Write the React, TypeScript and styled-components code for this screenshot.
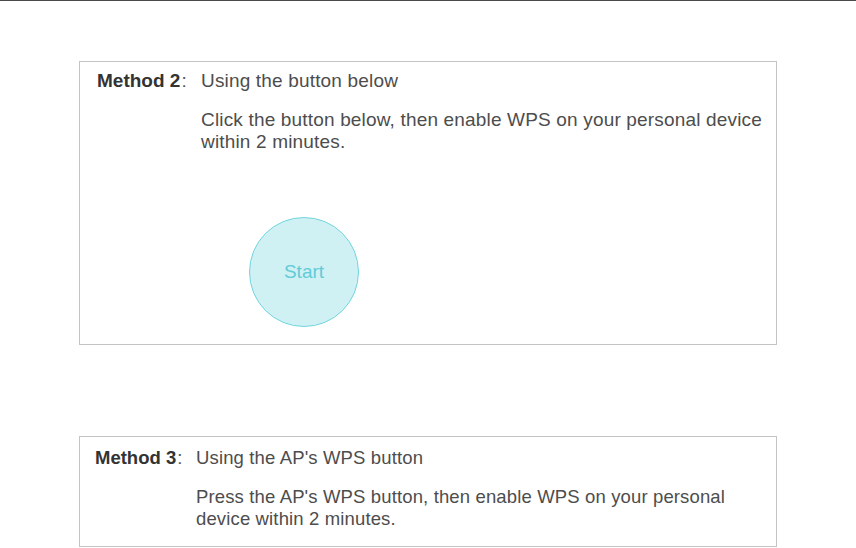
import styled, { createGlobalStyle } from "styled-components";

const GlobalStyle = createGlobalStyle`
  html, body {
    margin: 0;
    padding: 0;
    background: #ffffff;
  }
  body {
    font-family: "Liberation Sans", Arial, sans-serif;
    color: #4d4d4d;
  }
`;

const Page = styled.div`
  width: 856px;
  height: 548px;
  border-top: 1px solid #4a4a4a;
  box-sizing: border-box;
  padding-top: 60px;
  overflow: hidden;
`;

// one bordered card per WPS method; label column and type size differ slightly
const MethodBox = styled.section<{
  $top: number;
  $height: number;
  $pad: number;
  $indent: number;
  $labelW: number;
  $size: number;
  $spacing: number;
}>`
  box-sizing: border-box;
  margin: ${(p) => p.$top}px 0 0 79px;
  width: 698px;
  height: ${(p) => p.$height}px;
  border: 1px solid #c4c4c4;
  padding: ${(p) => p.$pad}px 0 0 ${(p) => p.$indent}px;
  display: grid;
  grid-template-columns: ${(p) => p.$labelW}px 1fr;
  align-content: start;
  font-size: ${(p) => p.$size}px;
  letter-spacing: ${(p) => p.$spacing}px;
  line-height: 22px;
`;

const Label = styled.div`
  display: flex;
  white-space: nowrap;
`;

const LabelBold = styled.span`
  font-weight: bold;
  color: #333333;
  letter-spacing: 0;
`;

const Colon = styled.span`
  color: #555555;
  margin-left: 1px;
`;

const Content = styled.div`
  display: flex;
  flex-direction: column;
  align-items: flex-start;
`;

const Title = styled.div`
  color: #4d4d4d;
  white-space: nowrap;
`;

const Description = styled.p`
  margin: 17px 0 0;
  color: #4d4d4d;
  white-space: nowrap;
`;

const StartButton = styled.button`
  margin: 64px 0 0 48px;
  width: 110px;
  height: 110px;
  border-radius: 50%;
  border: 1px solid #72d4de;
  background: #cff1f4;
  color: #62cbd7;
  font-family: "Liberation Sans", Arial, sans-serif;
  font-size: 19px;
  padding: 0;
  cursor: pointer;
`;

export default function App() {
  return (
    <>
      <GlobalStyle />
      <Page>
        <MethodBox $top={0} $height={284} $pad={8} $indent={17} $labelW={104} $size={19} $spacing={0.17}>
          <Label>
            <LabelBold>Method 2</LabelBold>
            <Colon>:</Colon>
          </Label>
          <Content>
            <Title>Using the button below</Title>
            <Description>
              Click the button below, then enable WPS on your personal device
              <br />
              within 2 minutes.
            </Description>
            <StartButton>Start</StartButton>
          </Content>
        </MethodBox>

        <MethodBox $top={91} $height={111} $pad={10} $indent={15} $labelW={101} $size={18.5} $spacing={0.14}>
          <Label>
            <LabelBold>Method 3</LabelBold>
            <Colon>:</Colon>
          </Label>
          <Content>
            <Title>Using the AP's WPS button</Title>
            <Description>
              Press the AP's WPS button, then enable WPS on your personal
              <br />
              device within 2 minutes.
            </Description>
          </Content>
        </MethodBox>
      </Page>
    </>
  );
}
